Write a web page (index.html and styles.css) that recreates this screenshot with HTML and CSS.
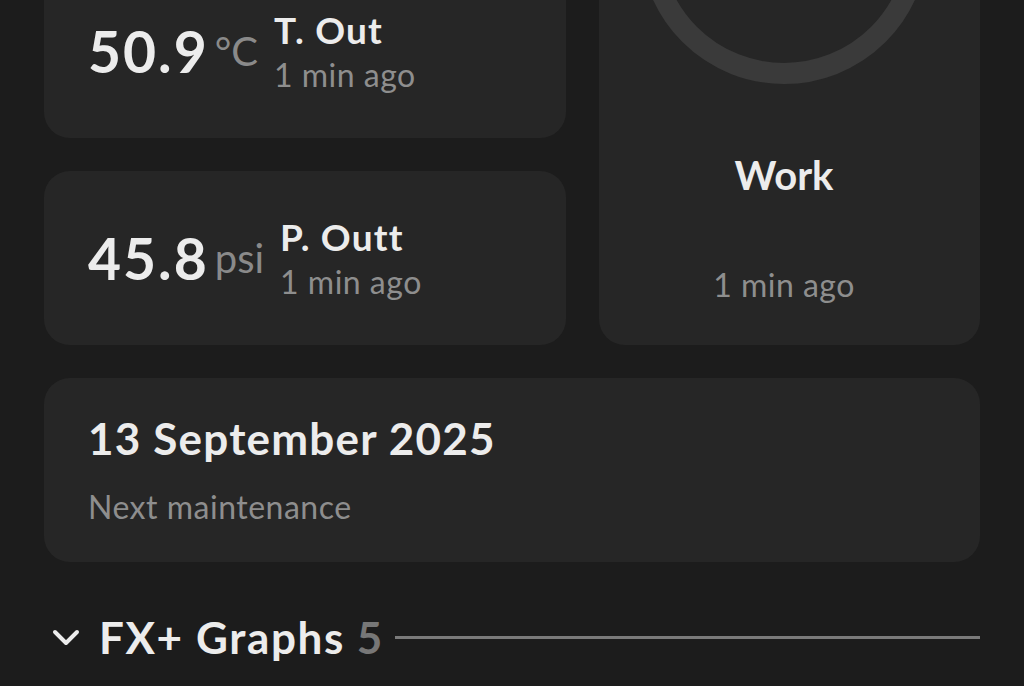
FILE: index.html
```html
<!DOCTYPE html>
<html lang="en">
<head>
<meta charset="utf-8">
<title>Device status</title>
<link rel="stylesheet" href="styles.css">
</head>
<body>
<main class="page">
  <section class="grid">
    <div class="card metric"></div>
    <div class="card status">
      <svg class="ring" width="288" height="288" viewBox="0 0 288 288"><circle cx="144" cy="144" r="133.5" fill="none" stroke="#3a3a3a" stroke-width="21"/></svg>
      <div class="status-title">Work</div>
      <div class="sub">1 min ago</div>
    </div>
    <div class="card metric">
      <div class="value"><span class="num">50.9</span><span class="unit">°C</span></div>
      <div class="label"><div class="title">T. Out</div><div class="sub">1 min ago</div></div>
    </div>
    <div class="card metric">
      <div class="value"><span class="num">45.8</span><span class="unit">psi</span></div>
      <div class="label"><div class="title">P. Outt</div><div class="sub">1 min ago</div></div>
    </div>
  </section>
  <section class="card date-card">
    <div class="date">13 September 2025</div>
    <div class="sub">Next maintenance</div>
  </section>
  <div class="section-head">
    <svg class="chev" width="28" height="18" viewBox="0 0 28 18"><path d="M3 3 L14 14 L25 3" fill="none" stroke="#ececec" stroke-width="4" stroke-linecap="round" stroke-linejoin="round"/></svg>
    <span class="head-title">FX+ Graphs</span>
    <span class="head-count">5</span>
    <span class="head-line"></span>
  </div>
</main>
</body>
</html>
```
FILE: styles.css
```css
html, body {
  margin: 0;
  padding: 0;
  background: #1c1c1c;
}
body {
  font-family: "Lato", "Liberation Sans", sans-serif;
  color: #ececec;
  overflow: hidden;
}
.page {
  margin-top: -243px;
  padding: 0 44px;
}
.grid {
  display: grid;
  grid-template-columns: 522px 381px;
  grid-template-rows: 174px 174px 174px;
  gap: 33px;
}
.card {
  background: #262626;
  border-radius: 26px;
}
.metric {
  display: flex;
  align-items: center;
  padding-left: 44px;
}
.value {
  display: flex;
  align-items: center;
}
.num {
  font-size: 57px;
  font-weight: 700;
  line-height: 1.2;
  letter-spacing: 2px;
}
.unit {
  font-size: 40px;
  line-height: 1.2;
  color: #8a8a8a;
  margin-left: 6px;
}
.label {
  margin-left: 16px;
}
.title {
  font-size: 37px;
  font-weight: 700;
  line-height: 1.2;
  letter-spacing: 1.2px;
}
.sub {
  font-size: 32px;
  line-height: 1.2;
  color: #8e8e8e;
  margin-top: 3px;
  letter-spacing: 0.5px;
}
.status {
  grid-column: 2;
  grid-row: 1 / span 3;
  display: flex;
  flex-direction: column;
  align-items: center;
  padding: 39px 11px 0 0;
}
.ring {
  display: block;
}
.status-title {
  font-size: 40px;
  font-weight: 700;
  line-height: 1.2;
  margin-top: 67px;
}
.status .sub {
  margin-top: 67px;
}
.date-card {
  margin-top: 33px;
  padding: 34px 44px 36px;
}
.date {
  font-size: 44px;
  font-weight: 700;
  line-height: 1.2;
  letter-spacing: 1.2px;
}
.date-card .sub {
  margin-top: 23px;
}
.section-head {
  display: flex;
  align-items: center;
  margin-top: 49px;
  padding-left: 8px;
}
.chev {
  display: block;
  margin-right: 19px;
}
.head-title {
  font-size: 44px;
  font-weight: 700;
  line-height: 1.2;
  letter-spacing: 1.6px;
}
.head-count {
  font-size: 44px;
  font-weight: 700;
  line-height: 1.2;
  color: #777777;
  margin-left: 12px;
}
.head-line {
  flex: 1;
  height: 3px;
  background: #7a7a7a;
  margin-left: 13px;
}
```
